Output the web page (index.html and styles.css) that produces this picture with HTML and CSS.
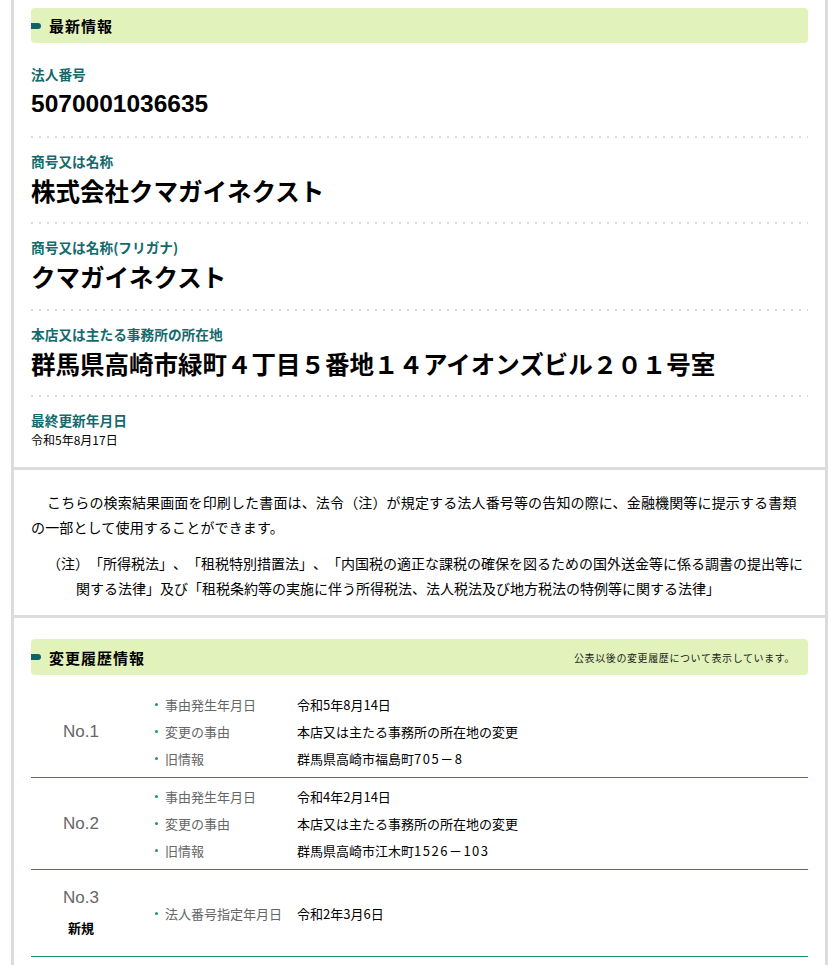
FILE: index.html
```html
<!DOCTYPE html>
<html lang="ja">
<head>
<meta charset="utf-8">
<title>法人番号公表サイト</title>
<link rel="stylesheet" href="styles.css">
</head>
<body>
<div class="page">
  <section class="section latest">
    <h2 class="bar"><span class="bar-title">最新情報</span></h2>
    <dl class="info">
      <div class="item">
        <dt class="label">法人番号</dt>
        <dd class="value num">5070001036635</dd>
      </div>
      <div class="item">
        <dt class="label">商号又は名称</dt>
        <dd class="value">株式会社クマガイネクスト</dd>
      </div>
      <div class="item">
        <dt class="label">商号又は名称(フリガナ)</dt>
        <dd class="value">クマガイネクスト</dd>
      </div>
      <div class="item">
        <dt class="label">本店又は主たる事務所の所在地</dt>
        <dd class="value">群馬県高崎市緑町４丁目５番地１４アイオンズビル２０１号室</dd>
      </div>
      <div class="item last">
        <dt class="label">最終更新年月日</dt>
        <dd class="date">令和5年8月17日</dd>
      </div>
    </dl>
  </section>

  <section class="section notice">
    <p class="para">こちらの検索結果画面を印刷した書面は、法令（注）が規定する法人番号等の告知の際に、金融機関等に提示する書類の一部として使用することができます。</p>
    <p class="note">（注）「所得税法」、「租税特別措置法」、「内国税の適正な課税の確保を図るための国外送金等に係る調書の提出等に関する法律」及び「租税条約等の実施に伴う所得税法、法人税法及び地方税法の特例等に関する法律」</p>
  </section>

  <section class="section history">
    <h2 class="bar"><span class="bar-title">変更履歴情報</span><span class="bar-note">公表以後の変更履歴について表示しています。</span></h2>
    <div class="rows">
      <div class="row">
        <div class="no"><span class="no-num">No.1</span></div>
        <ul class="facts">
          <li class="fact"><span class="fact-label">事由発生年月日</span><span class="fact-value">令和5年8月14日</span></li>
          <li class="fact"><span class="fact-label">変更の事由</span><span class="fact-value">本店又は主たる事務所の所在地の変更</span></li>
          <li class="fact"><span class="fact-label">旧情報</span><span class="fact-value">群馬県高崎市福島町<span class="digits">705－8</span></span></li>
        </ul>
      </div>
      <div class="row">
        <div class="no"><span class="no-num">No.2</span></div>
        <ul class="facts">
          <li class="fact"><span class="fact-label">事由発生年月日</span><span class="fact-value">令和4年2月14日</span></li>
          <li class="fact"><span class="fact-label">変更の事由</span><span class="fact-value">本店又は主たる事務所の所在地の変更</span></li>
          <li class="fact"><span class="fact-label">旧情報</span><span class="fact-value">群馬県高崎市江木町<span class="digits">1526－103</span></span></li>
        </ul>
      </div>
      <div class="row">
        <div class="no new"><span class="no-num">No.3</span><span class="no-tag">新規</span></div>
        <ul class="facts">
          <li class="fact"><span class="fact-label">法人番号指定年月日</span><span class="fact-value">令和2年3月6日</span></li>
        </ul>
      </div>
    </div>
  </section>
</div>
</body>
</html>
```

FILE: styles.css
```css
html, body {
  margin: 0;
  padding: 0;
  background: #ffffff;
}

body {
  font-family: "Noto Sans CJK JP", "Noto Sans", sans-serif;
  color: #000;
}

.page {
  margin-left: 11px;
  width: 817px;
  box-sizing: border-box;
  border-left: 3px solid #dcdcdc;
  border-right: 3px solid #dcdcdc;
}

.section {
  border-bottom: 3px solid #dcdcdc;
  padding: 0 17px;
}

/* heading bar */
.bar {
  margin: 0;
  display: flex;
  align-items: center;
  justify-content: space-between;
  background: #e1f2bb;
  border-radius: 4px;
  padding-right: 13px;
}

.bar-title {
  display: flex;
  align-items: center;
  font-size: 15px;
  font-weight: bold;
  letter-spacing: 1px;
  color: #000;
}

.bar-title::before {
  content: "";
  display: block;
  width: 10px;
  height: 6px;
  border-radius: 0 3px 3px 0;
  background: #0d6366;
  margin-right: 8px;
}

.bar-note {
  font-size: 10px;
  font-weight: normal;
  letter-spacing: 0.6px;
  color: #222;
}

/* latest section */
.latest {
  padding-top: 8px;
  padding-bottom: 17px;
}

.latest .bar {
  height: 35px;
}

.info {
  margin: 8px 0 0;
}

.item {
  padding: 13px 0 13.5px;
  background-image: linear-gradient(to right, #d9d9d9 2px, transparent 2px);
  background-size: 8px 2px;
  background-repeat: repeat-x;
  background-position: left bottom;
}

.item.last {
  padding-bottom: 0;
  background: none;
}

.label {
  font-size: 13.7px;
  line-height: 20px;
  font-weight: bold;
  color: #146a6c;
}

.value {
  margin: 0;
  font-size: 24.5px;
  line-height: 40px;
  font-weight: bold;
  color: #000;
}

.value.num {
  font-family: "Liberation Sans", "Noto Sans CJK JP", sans-serif;
}

.date {
  margin: 0;
  font-size: 12px;
  line-height: 20px;
}

/* notice section */
.notice {
  padding-top: 20px;
  padding-bottom: 14px;
}

.para {
  margin: 0;
  font-size: 14px;
  line-height: 25px;
  text-indent: 16px;
  letter-spacing: 0.15px;
}

.note {
  margin: 11px 0 0;
  font-size: 14px;
  line-height: 25px;
  padding-left: 45px;
  text-indent: -29px;
  text-spacing-trim: space-all;
}

/* history section */
.history {
  padding-top: 21px;
  padding-bottom: 20px;
}

.history .bar {
  height: 36px;
}

.rows {
  margin-top: 11px;
}

.row {
  display: flex;
  padding: 5px 0;
  border-bottom: 1px solid #1d9159;
}

.no {
  width: 100px;
  display: flex;
  flex-direction: column;
  align-items: center;
  justify-content: center;
}

.no.new {
  padding: 8px 0;
}

.no-num {
  font-family: "Liberation Sans", sans-serif;
  font-size: 17px;
  line-height: 30px;
  color: #666;
}

.no-tag {
  font-size: 13px;
  line-height: 30px;
  font-weight: bold;
  color: #000;
}

.facts {
  list-style: none;
  margin: 0;
  padding: 0 0 0 24px;
  display: flex;
  flex-direction: column;
  justify-content: center;
}

.fact {
  display: flex;
  align-items: center;
  font-size: 13px;
  line-height: 27px;
}

.fact::before {
  content: "";
  width: 3px;
  height: 3px;
  border-radius: 50%;
  background: #1f9a55;
  margin-right: 7px;
  flex: none;
}

.fact-label {
  width: 132px;
  flex: none;
  color: #666;
}

.fact-value {
  color: #000;
}

.digits {
  letter-spacing: 1.5px;
}
```
